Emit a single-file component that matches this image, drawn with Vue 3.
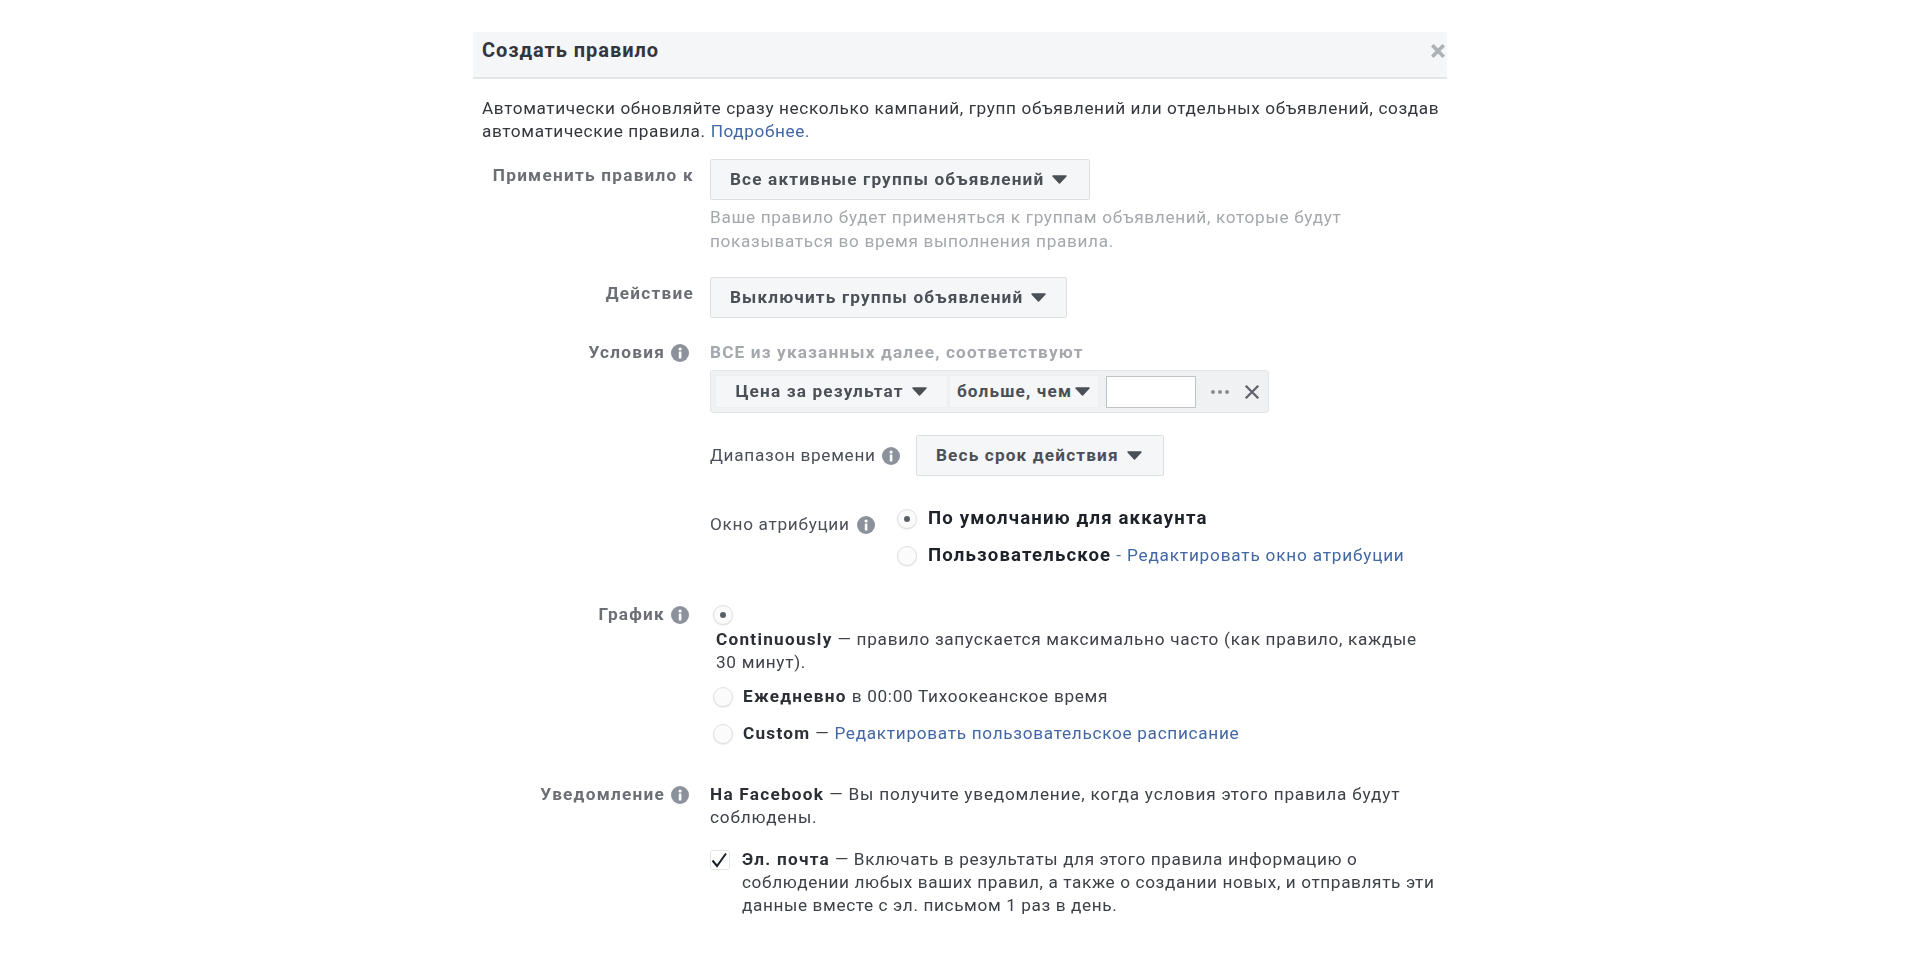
<script setup>
</script>

<template>
  <div class="dialog">
    <header class="head">
      <h1 class="title">Создать правило</h1>
      <svg class="close" viewBox="0 0 14 14"><path d="M2 2l10 10M12 2L2 12" /></svg>
    </header>

    <p class="intro">Автоматически обновляйте сразу несколько кампаний, групп объявлений или отдельных объявлений, создав автоматические правила. <a class="link">Подробнее.</a></p>

    <section class="row row-apply">
      <div class="label lab-apply">Применить правило к</div>
      <div class="body">
        <button class="btn btn-apply">Все активные группы объявлений<svg class="caret" viewBox="0 0 17 11"><path d="M2 2h13L8.5 9z" /></svg></button>
        <p class="hint">Ваше правило будет применяться к группам объявлений, которые будут показываться во время выполнения правила.</p>
      </div>
    </section>

    <section class="row row-action">
      <div class="label lab-action">Действие</div>
      <div class="body">
        <button class="btn btn-action">Выключить группы объявлений<svg class="caret" viewBox="0 0 17 11"><path d="M2 2h13L8.5 9z" /></svg></button>
      </div>
    </section>

    <section class="row row-cond">
      <div class="label lab-cond">Условия
        <svg class="info" viewBox="0 0 18 18"><circle cx="9" cy="9" r="9" /><rect x="7.8" y="7.6" width="2.6" height="6.8" rx=".5" class="i" /><circle cx="9.1" cy="5" r="1.6" class="i" /></svg>
      </div>
      <div class="body">
        <div class="all">ВСЕ из указанных далее, соответствуют</div>
        <div class="cond">
          <button class="cbtn cbtn-a">Цена за результат<svg class="caret" viewBox="0 0 17 11"><path d="M2 2h13L8.5 9z" /></svg></button>
          <button class="cbtn cbtn-b">больше, чем<svg class="caret caret-tight" viewBox="0 0 17 11"><path d="M2 2h13L8.5 9z" /></svg></button>
          <span class="field"></span>
          <span class="dots"><b></b><b></b><b></b></span>
          <svg class="cx" viewBox="0 0 14 14"><path d="M1.5 1.5l11 11M12.5 1.5l-11 11" /></svg>
        </div>
        <div class="range">
          <div class="range-label">
            <span class="sub">Диапазон времени</span>
            <svg class="info" viewBox="0 0 18 18"><circle cx="9" cy="9" r="9" /><rect x="7.8" y="7.6" width="2.6" height="6.8" rx=".5" class="i" /><circle cx="9.1" cy="5" r="1.6" class="i" /></svg>
          </div>
          <button class="btn btn-range">Весь срок действия<svg class="caret" viewBox="0 0 17 11"><path d="M2 2h13L8.5 9z" /></svg></button>
        </div>
        <div class="attr">
          <div class="attr-label">
            <span class="sub">Окно атрибуции</span>
            <svg class="info" viewBox="0 0 18 18"><circle cx="9" cy="9" r="9" /><rect x="7.8" y="7.6" width="2.6" height="6.8" rx=".5" class="i" /><circle cx="9.1" cy="5" r="1.6" class="i" /></svg>
          </div>
          <div class="attr-opts">
            <div class="opt"><span class="radio on"></span><b class="strong">По умолчанию для аккаунта</b></div>
            <div class="opt opt2"><span class="radio"></span><span><b class="strong">Пользовательское</b><a class="link"> - Редактировать окно атрибуции</a></span></div>
          </div>
        </div>
      </div>
    </section>

    <section class="row row-sched">
      <div class="label lab-sched">График
        <svg class="info" viewBox="0 0 18 18"><circle cx="9" cy="9" r="9" /><rect x="7.8" y="7.6" width="2.6" height="6.8" rx=".5" class="i" /><circle cx="9.1" cy="5" r="1.6" class="i" /></svg>
      </div>
      <div class="body">
        <span class="radio on radio-first"></span>
        <p class="cont"><b class="strong-s">Continuously</b> — правило запускается максимально часто (как правило, каждые 30 минут).</p>
        <div class="sopt"><span class="radio"></span><span><b class="strong-s">Ежедневно</b> в 00:00 Тихоокеанское время</span></div>
        <div class="sopt sopt2"><span class="radio"></span><span><b class="strong-s">Custom</b> — <a class="link">Редактировать пользовательское расписание</a></span></div>
      </div>
    </section>

    <section class="row row-notif">
      <div class="label lab-notif">Уведомление
        <svg class="info" viewBox="0 0 18 18"><circle cx="9" cy="9" r="9" /><rect x="7.8" y="7.6" width="2.6" height="6.8" rx=".5" class="i" /><circle cx="9.1" cy="5" r="1.6" class="i" /></svg>
      </div>
      <div class="body">
        <p class="fb"><b class="strong-s">На Facebook</b> — Вы получите уведомление, когда условия этого правила будут соблюдены.</p>
        <div class="mail">
          <span class="check"><svg viewBox="0 0 20 20"><path d="M2.5 10.5l4.5 5.5 9-12.5" /></svg></span>
          <p class="mail-t"><b class="strong-s">Эл. почта</b> — Включать в результаты для этого правила информацию о соблюдении любых ваших правил, а также о создании новых, и отправлять эти данные вместе с эл. письмом 1 раз в день.</p>
        </div>
      </div>
    </section>
  </div>
</template>

<style>
html, body { background: #fff; }
</style>

<style scoped>
.dialog {
  width: 974px;
  margin: 32px auto 0;
  font-family: Roboto, "Liberation Sans", sans-serif;
  font-size: 17.2px;
  letter-spacing: .7px;
  line-height: 23px;
  color: #33363c;
  filter: blur(0.4px);
}
.head {
  height: 47px;
  box-sizing: border-box;
  background: #f5f6f7;
  border-bottom: 2px solid #e4e6e9;
  padding-left: 9px;
  display: flex;
  justify-content: space-between;
  align-items: flex-start;
}
.title {
  margin: 6px 0 0;
  font-size: 20px;
  line-height: 24px;
  font-weight: 700;
  letter-spacing: .95px;
  color: #33363c;
}
.close { width: 16px; height: 16px; margin: 11px 1px 0 0; }
.close path { stroke: #aeb1b6; stroke-width: 3.2; fill: none; }
.intro { margin: 18px 0 0; padding: 0 0 0 9px; letter-spacing: .62px; }
.link { color: #4267a4; font-weight: 400; }
.row { display: flex; }
.label {
  width: 221px;
  flex: none;
  text-align: right;
  font-weight: 700;
  letter-spacing: 1.25px;
  color: #6b6e74;
  display: flex;
  justify-content: flex-end;
  align-items: center;
  height: 23px;
  gap: 6px;
}
.label .info { margin-right: 5px; }
.body { margin-left: 16px; flex: 1; min-width: 0; }
.btn, .cbtn {
  font: inherit;
  letter-spacing: 1.15px;
  font-weight: 700;
  color: #4b4f56;
  background: #f5f6f7;
  border: 1px solid #dddfe2;
  border-radius: 2px;
  display: flex;
  align-items: center;
  padding: 0;
  white-space: nowrap;
}
.btn { height: 41px; padding: 0 0 0 19px; }
.caret {
  width: 17px;
  height: 11px;
  flex: none;
  margin-left: 7px;
}
.caret path { fill: #4b4f56; stroke: #4b4f56; stroke-width: 1.5; stroke-linejoin: round; }
.caret-tight { margin-left: 2px; }
.row-apply { margin-top: 16px; }
.lab-apply { margin-top: 5px; }
.btn-apply { width: 380px; }
.hint { margin: 5px 0 0; width: 670px; color: #a4a7ac; line-height: 24px; letter-spacing: .67px; }
.row-action { margin-top: 24px; }
.lab-action { margin-top: 5px; }
.btn-action { width: 357px; }
.row-cond { margin-top: 23px; }
.all { color: #a4a7ac; font-weight: 700; letter-spacing: 1.16px; }
.cond {
  width: 559px;
  height: 43px;
  box-sizing: border-box;
  margin-top: 6px;
  background: #f0f1f3;
  border: 1px solid #e3e5e8;
  border-radius: 3px;
  display: flex;
  align-items: center;
  padding-left: 4px;
}
.cbtn { height: 33px; justify-content: center; border-color: #eceef0; }
.cbtn-a { width: 233px; }
.cbtn-b { width: 150px; margin-left: 1px; }
.field {
  width: 90px;
  height: 32px;
  box-sizing: border-box;
  background: #fff;
  border: 1px solid #bfc2c7;
  margin-left: 7px;
}
.dots { display: flex; gap: 3px; margin-left: 15px; }
.dots b { width: 4px; height: 4px; border-radius: 50%; background: #8a8d93; }
.cx { width: 16px; height: 16px; margin-left: 15px; }
.cx path { stroke: #5f6369; stroke-width: 2; fill: none; }
.range { display: flex; align-items: center; margin-top: 22px; }
.range-label { width: 206px; display: flex; align-items: center; gap: 6px; }
.sub { color: #4b4f56; }
.info { width: 18px; height: 18px; flex: none; }
.info circle:first-child { fill: #8b929c; }
.info .i { fill: #fff; }
.btn-range { width: 248px; }
.attr { display: flex; margin-top: 31px; }
.attr-label { display: flex; align-items: center; height: 23px; width: 187px; margin-top: 6px; gap: 7px; }
.opt { display: flex; align-items: center; gap: 11px; height: 23px; }
.opt2 { margin-top: 14px; }
.opt .link { letter-spacing: .8px; }
.radio {
  display: inline-block;
  flex: none;
  width: 20px;
  height: 20px;
  box-sizing: border-box;
  border-radius: 50%;
  background: #fbfbfc;
  border: 1px solid #dcdee1;
  box-shadow: 0 1px 1px rgba(0, 0, 0, .08);
  position: relative;
}
.radio.on::after {
  content: "";
  position: absolute;
  left: 6px;
  top: 6px;
  width: 6px;
  height: 6px;
  border-radius: 50%;
  background: #5b5f66;
}
.strong { color: #1d2129; font-weight: 700; font-size: 18.6px; letter-spacing: 1.15px; }
.strong-s { color: #2b2e34; font-weight: 700; letter-spacing: 1.25px; }
.row-sched { margin-top: 36px; }
.radio-first { display: block; margin-left: 3px; margin-top: 2px; }
.cont { margin: 3px 0 0 6px; width: 715px; color: #3e4148; }
.sopt { display: flex; gap: 10px; align-items: center; height: 23px; margin-top: 11px; margin-left: 3px; color: #3e4148; }
.sopt2 { margin-top: 14px; }
.row-notif { margin-top: 38px; }
.fb { margin: 0; width: 720px; color: #3e4148; letter-spacing: .8px; }
.mail { display: flex; margin-top: 19px; color: #3e4148; }
.check {
  flex: none;
  width: 20px;
  height: 20px;
  margin-top: 2px;
  box-sizing: border-box;
  border: 1px solid #e3e5e8;
  border-radius: 3px;
  background: #fff;
  display: block;
}
.check svg { width: 20px; height: 20px; display: block; margin: -1px; }
.check path { stroke: #1d2129; stroke-width: 2; fill: none; }
.mail-t { margin: 0 0 0 12px; width: 700px; letter-spacing: .62px; }
</style>
